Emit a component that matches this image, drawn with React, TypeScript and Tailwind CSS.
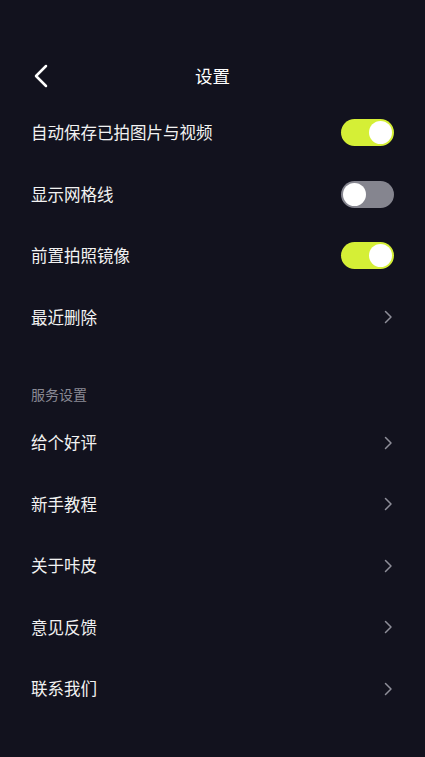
import React, { useState } from 'react';

const font = { fontFamily: '"Noto Sans CJK SC", "Noto Sans", sans-serif' };

function Toggle({ on, onChange }: { on: boolean; onChange: () => void }) {
  return (
    <button
      type="button"
      onClick={onChange}
      className={`relative w-[53px] h-[27px] rounded-full transition-colors ${on ? 'bg-[#d5ef36]' : 'bg-[#85858f]'}`}
    >
      <span
        className={`absolute top-[2px] w-[23px] h-[23px] rounded-full bg-white transition-all ${on ? 'left-[28px]' : 'left-[2px]'}`}
      />
    </button>
  );
}

function Chevron() {
  return (
    <svg width="10" height="16" viewBox="0 0 10 16" fill="none" className="mr-[1px]">
      <path d="M2.5 2.5 L8 8 L2.5 13.5" stroke="#8e8e99" strokeWidth="1.5" strokeLinecap="round" strokeLinejoin="round" />
    </svg>
  );
}

function Row({ label, right }: { label: string; right: React.ReactNode }) {
  return (
    <div className="flex items-center justify-between h-[61.5px] px-[31px]">
      <span className="text-[16.5px] text-[#f2f2f2]">{label}</span>
      {right}
    </div>
  );
}

export default function App() {
  const [autoSave, setAutoSave] = useState(true);
  const [grid, setGrid] = useState(false);
  const [mirror, setMirror] = useState(true);

  return (
    <div className="min-h-[757px] w-full bg-[#12121e] pt-[50px]" style={font}>
      <div className="relative flex items-center justify-center h-[52px]">
        <button type="button" className="absolute left-[33px] top-[14px]">
          <svg width="16" height="24" viewBox="0 0 16 24" fill="none">
            <path d="M13 2 L3 12 L13 22" stroke="#ffffff" strokeWidth="2.5" strokeLinecap="round" strokeLinejoin="round" />
          </svg>
        </button>
        <span className="text-[17.5px] text-white">设置</span>
      </div>

      <Row label="自动保存已拍图片与视频" right={<Toggle on={autoSave} onChange={() => setAutoSave(!autoSave)} />} />
      <Row label="显示网格线" right={<Toggle on={grid} onChange={() => setGrid(!grid)} />} />
      <Row label="前置拍照镜像" right={<Toggle on={mirror} onChange={() => setMirror(!mirror)} />} />
      <Row label="最近删除" right={<Chevron />} />

      <div className="px-[31px] pt-[36px] pb-[8px] h-[64px]">
        <span className="block leading-[20px] text-[14px] text-[#8a8a95]">服务设置</span>
      </div>

      <Row label="给个好评" right={<Chevron />} />
      <Row label="新手教程" right={<Chevron />} />
      <Row label="关于咔皮" right={<Chevron />} />
      <Row label="意见反馈" right={<Chevron />} />
      <Row label="联系我们" right={<Chevron />} />
    </div>
  );
}
